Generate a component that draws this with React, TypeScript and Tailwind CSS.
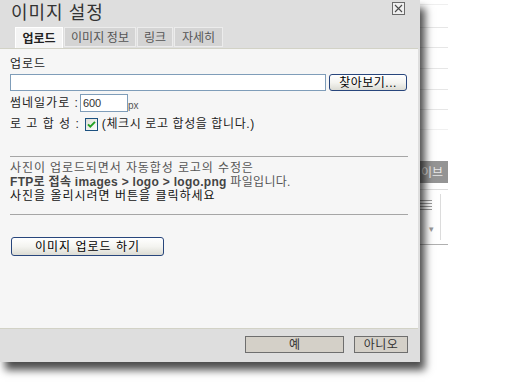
// ImageSettingsDialog — 이미지 설정 팝업 (업로드 탭)

import React from 'react';

const TABS = [
  { label: '업로드', w: 'w-[48px]', active: true },
  { label: '이미지 정보', w: 'w-[72px]', active: false },
  { label: '링크', w: 'w-[36px]', active: false },
  { label: '자세히', w: 'w-[49px]', active: false },
];

// XP style push button
const xpButton =
  'rounded-[3px] border border-[#28467c] bg-linear-to-b from-white via-[#f4f4f0] to-[#dcdcd4] text-black text-[12px] leading-none flex items-center justify-center';

function CloseIcon() {
  return (
    <svg width="13" height="13" viewBox="0 0 13 13">
      <rect x="0.5" y="0.5" width="12" height="12" fill="#efefef" stroke="#6a6a6a" />
      <path d="M3 3 L10 10 M10 3 L3 10" stroke="#4a4a4a" strokeWidth="1.1" />
    </svg>
  );
}

function CheckBox() {
  return (
    <svg width="13" height="13" viewBox="0 0 13 13">
      <defs>
        <linearGradient id="cbg" x1="0" y1="0" x2="1" y2="1">
          <stop offset="0" stopColor="#dcdcd4" />
          <stop offset="1" stopColor="#ffffff" />
        </linearGradient>
      </defs>
      <rect x="0.5" y="0.5" width="12" height="12" fill="url(#cbg)" stroke="#1c5180" />
      <path d="M3 6.3 L5.3 8.7 L10 3.9" fill="none" stroke="#21a121" strokeWidth="1.9" />
    </svg>
  );
}

// faint page that sits behind the dialog
function BackgroundPage() {
  return (
    <div className="ml-[380px] w-[68px] flex flex-col">
      <div className="h-[5px] border-b border-[#efefef]" />
      <div className="h-[23px] border-b border-[#e6e6e6]" />
      <div className="h-[20px] border-b border-[#e6e6e6]" />
      <div className="h-[21px] border-b border-[#e6e6e6]" />
      <div className="h-[21px] border-b border-[#e6e6e6]" />
      <div className="h-[20px] border-b border-[#e6e6e6]" />
      <div className="h-[20px] border-b border-[#f0f0f0]" />
      <div className="h-[31px]" />
      <div className="h-[22px] bg-[#949494] pl-[41px] text-[12px] leading-[22px] text-[#e8e8e8] [font-family:'Noto_Sans_CJK_KR',sans-serif]">
        이브
      </div>
      <div className="h-[7px] border-b border-[#dcdcdc]" />
      <div className="flex h-[55px] border-b border-[#b0b0b0]">
        <div className="w-[40px]" />
        <div className="flex flex-col gap-[3px] pt-[10px]">
          <div className="flex flex-col gap-[2px] w-[13px]">
            <div className="h-px bg-[#9a9a9a]" />
            <div className="h-px bg-[#9a9a9a]" />
            <div className="h-px bg-[#9a9a9a]" />
            <div className="h-px bg-[#9a9a9a]" />
          </div>
          <div className="mt-[12px] text-[9px] text-[#999] leading-none pl-[10px]">▾</div>
        </div>
        <div className="ml-[6px] mt-[4px] w-[8px] h-[46px] border-l border-[#dcdcdc]" />
      </div>
    </div>
  );
}

export default function App() {
  return (
    <div className="relative w-[512px] h-[391px] overflow-hidden bg-white [font-family:'Liberation_Sans','Noto_Sans_CJK_KR',sans-serif]">
      <BackgroundPage />

      {/* Dialog */}
      <div className="absolute left-0 top-0 w-[420px] h-[362px] flex flex-col bg-[#dedede] shadow-[5px_8px_8px_rgba(0,0,0,0.7)]">
        {/* Title bar + tabs */}
        <div className="h-[48px] flex flex-col">
          <div className="h-[27px] flex items-start justify-between pl-[11px] pr-[15px] pt-[1px]">
            <h1 className="text-[18px] leading-[21px] tracking-[1px] text-[#333] [font-family:'Noto_Sans_CJK_KR',sans-serif]">
              이미지 설정
            </h1>
            <div className="pt-[1px]">
              <CloseIcon />
            </div>
          </div>
          <div className="h-[21px] flex gap-[1px] pl-[15px]">
            {TABS.map((t) => (
              <div
                key={t.label}
                className={
                  t.active
                    ? `${t.w} h-[21px] flex items-center justify-center bg-[#f4f4f4] border-t border-l border-r border-white text-[12px] font-bold text-[#222] [font-family:'Noto_Sans_CJK_KR',sans-serif]`
                    : `${t.w} h-[20px] flex items-center justify-center bg-[#d4d4d4] border border-[#ececec] text-[12px] text-[#555] [font-family:'Noto_Sans_CJK_KR',sans-serif]`
                }
              >
                {t.label}
              </div>
            ))}
          </div>
        </div>

        {/* Content */}
        <div className="w-[418px] h-[281px] flex flex-col bg-[#f6f6f6] border-t border-b border-[#d2d2c6] px-[10px] pt-[7px] text-[12px] text-[#222]">
          <div className="leading-[16px] tracking-[1px]">업로드</div>

          <div className="mt-[2px] flex gap-[3px]">
            <div className="w-[316px] h-[17px] bg-white border border-[#7f9db9]" />
            <button className={`${xpButton} w-[78px] h-[17px] tracking-[0.5px]`}>찾아보기...</button>
          </div>

          <div className="mt-[3px] h-[18px] flex items-center">
            <span className="leading-[16px] tracking-[1px]">썸네일가로 :</span>
            <div className="ml-[1px] w-[48px] h-[18px] bg-white border border-[#7f9db9] flex items-center pl-[2px] text-[11px] text-[#333]">
              600
            </div>
            <span className="mt-[4px] text-[10px] text-[#555]">px</span>
          </div>

          <div className="mt-[3px] h-[18px] flex items-center">
            <span className="leading-[16px] tracking-[1px]">로 고 합 성 :</span>
            <div className="ml-[5px] flex items-center">
              <CheckBox />
            </div>
            <span className="ml-[4px] leading-[16px] tracking-[0.6px]">(체크시 로고 합성을 합니다.)</span>
          </div>

          <div className="mt-[23px] h-px bg-[#a6a6a6]" />

          <div className="mt-[4px] leading-[14px]">
            <p className="text-[#555] tracking-[0.9px]">사진이 업로드되면서 자동합성 로고의 수정은</p>
            <p className="text-[#555] tracking-[0.3px]">
              <b className="text-[#444]">FTP로 접속 images &gt; logo &gt; logo.png</b> 파일입니다.
            </p>
            <p className="text-[#111] tracking-[1px]">사진을 올리시려면 버튼을 클릭하세요</p>
          </div>

          <div className="mt-[11px] h-px bg-[#a6a6a6]" />

          <button className={`${xpButton} mt-[22px] ml-[1px] w-[153px] h-[19px] tracking-[1px]`}>이미지 업로드 하기</button>
        </div>

        {/* Footer */}
        <div className="flex-1 flex items-start justify-end gap-[10px] pt-[7px] pr-[12px]">
          <button className="w-[99px] h-[17px] bg-[#d4d0c8] border border-[#6e6e6e] text-[12px] leading-none text-[#333] flex items-center justify-center">
            예
          </button>
          <button className="w-[54px] h-[17px] bg-[#d4d0c8] border border-[#6e6e6e] text-[12px] leading-none tracking-[0.5px] text-[#333] flex items-center justify-center">
            아니오
          </button>
        </div>
      </div>
    </div>
  );
}
